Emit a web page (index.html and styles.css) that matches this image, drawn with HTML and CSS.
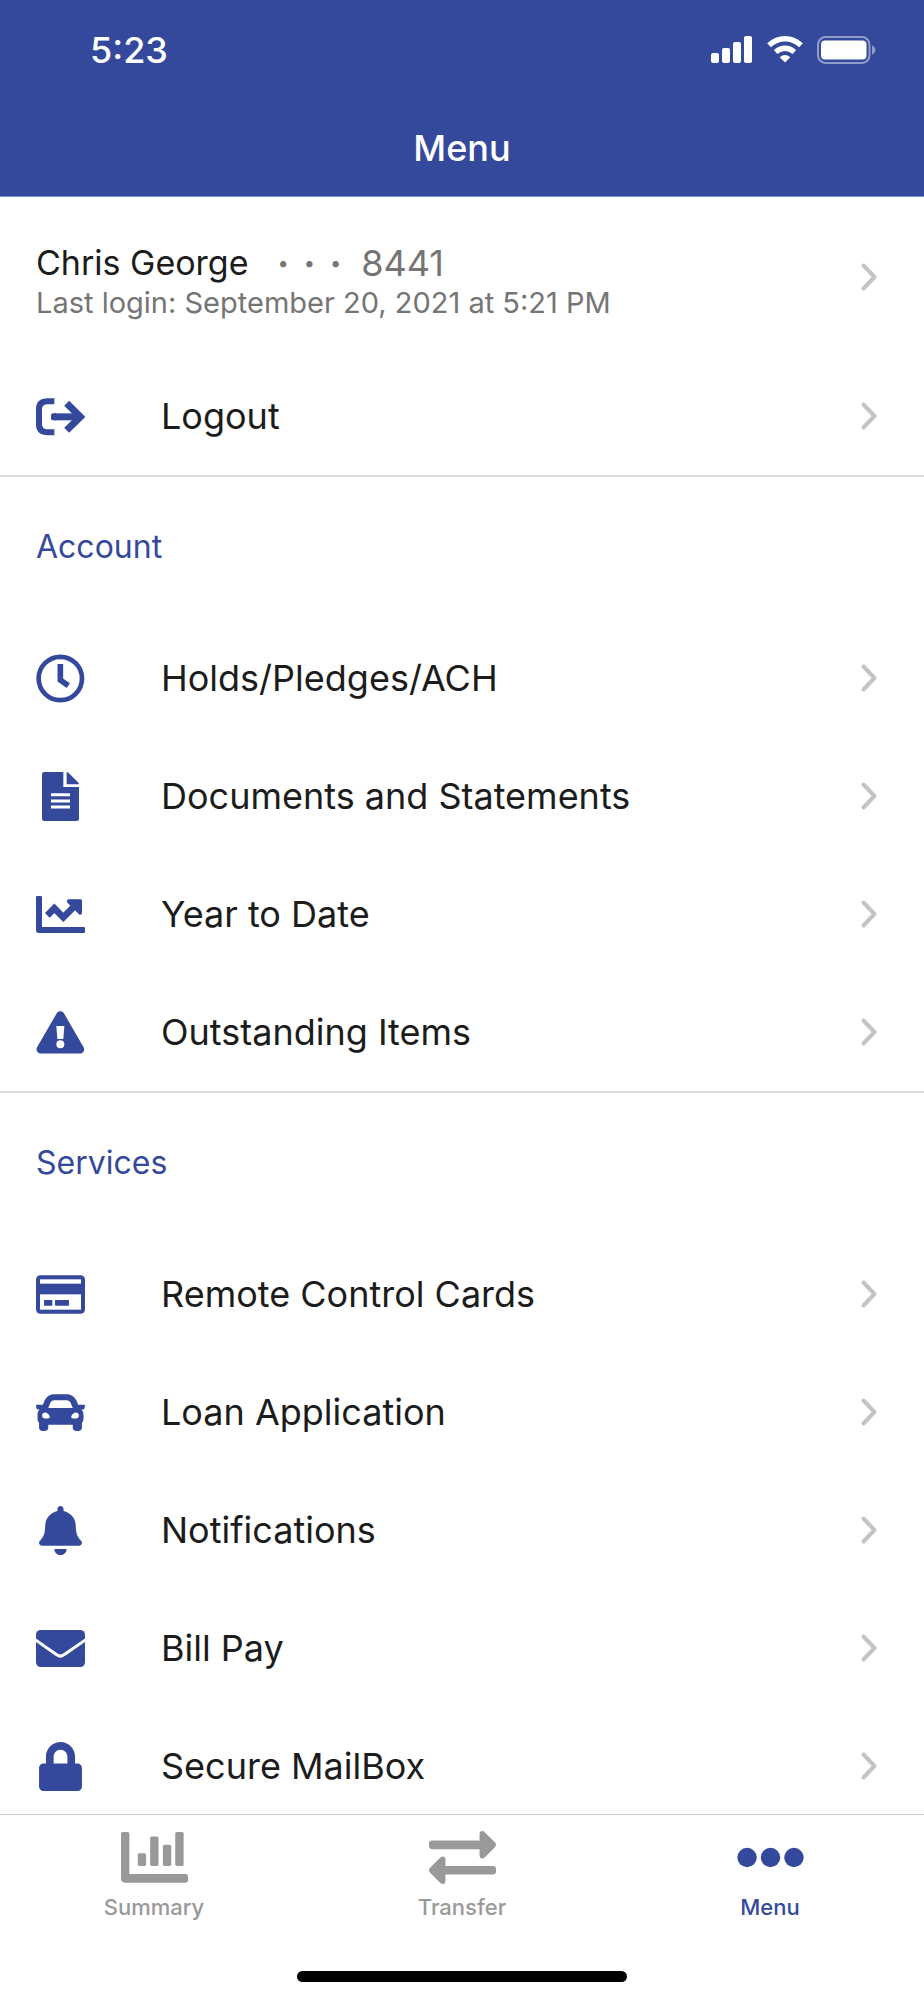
FILE: index.html
```html
<!DOCTYPE html>
<html lang="en">
<head>
  <meta charset="UTF-8">
  <meta name="viewport" content="width=device-width, initial-scale=1">
  <title>Menu</title>
  <link rel="stylesheet" href="styles.css">
</head>
<body>
  <!-- chevron shared by every row -->
  <svg class="sprite" aria-hidden="true">
    <symbol id="chevron" viewBox="0 0 16 28">
      <path d="M2.5 2.5L13.5 14L2.5 25.5" fill="none" stroke="#c4c4c6" stroke-width="4" stroke-linecap="round" stroke-linejoin="round"/>
    </symbol>
  </svg>

  <header class="header">
    <div class="status-bar">
      <span class="time">5:23</span>
      <div class="status-icons">
        <svg width="42" height="28" viewBox="0 0 42 28" fill="#fff">
          <rect x="0" y="17" width="8" height="10" rx="2"/>
          <rect x="11" y="12" width="8" height="15" rx="2"/>
          <rect x="22" y="6" width="8" height="21" rx="2"/>
          <rect x="33" y="0" width="8" height="27" rx="2"/>
        </svg>
        <svg width="36" height="28" viewBox="0 0 36 28" fill="none" stroke="#fff" stroke-width="5.4">
          <path d="M2 9.2Q9.2 2.7 18 2.7T34 9.2"/>
          <path d="M8.600 16Q13 12.200 18 12.200T27.400 16"/>
          <path d="M18 26.500L12.700 21.200Q18 16.600 23.300 21.200Z" fill="#fff" stroke="none"/>
        </svg>
        <svg width="59" height="28" viewBox="0 0 59 28">
          <rect x="1" y="1" width="51.500" height="26" rx="7.500" fill="none" stroke="#929cc9" stroke-width="2"/>
          <rect x="4" y="4.500" width="45.500" height="19" rx="4" fill="#fff"/>
          <path d="M55 9.500Q58.300 11 58.300 14T55 18.500Z" fill="#929cc9"/>
        </svg>
      </div>
    </div>
    <h1 class="title">Menu</h1>
  </header>

  <main class="content">
    <a class="user" href="#">
      <div class="user-text">
        <div class="user-name">
          <span>Chris George</span>
          <span class="dots"><i>•</i><i>•</i><i>•</i></span>
          <span class="number">8441</span>
        </div>
        <div class="last-login">Last login: September 20, 2021 at 5:21 PM</div>
      </div>
      <svg class="chevron"><use href="#chevron"/></svg>
    </a>

    <a class="row" href="#">
      <svg class="icon" viewBox="0 0 147 147" fill="none" stroke="currentColor">
        <path d="M55 28H35Q9 28 9 52V97Q9 121 35 121H55" stroke-width="18"/>
        <path d="M55 74.500H130" stroke-width="21"/>
        <path d="M45 70Q45 64 51 64H60V85H51Q45 85 45 79Z" fill="currentColor" stroke="none"/>
        <path d="M92 34L133 74.500L92 115" stroke-width="21"/>
      </svg>
      <span class="label">Logout</span>
      <svg class="chevron"><use href="#chevron"/></svg>
    </a>

    <section class="group">
      <h2 class="group-title">Account</h2>
      <a class="row" href="#">
        <svg class="icon" viewBox="0 0 147 147" fill="none" stroke="currentColor">
          <circle cx="73" cy="73.500" r="65" stroke-width="14"/>
          <path d="M73 30V78L97 95" stroke-width="17"/>
        </svg>
        <span class="label">Holds/Pledges/ACH</span>
        <svg class="chevron"><use href="#chevron"/></svg>
      </a>
      <a class="row" href="#">
        <svg class="icon" viewBox="0 0 147 147" fill="currentColor">
          <path d="M25 0H82V45H129V140Q129 147 122 147H25Q18 147 18 140V7Q18 0 25 0Z"/>
          <path d="M92 0Q95 0 98 3L126 31Q129 34 129 37H92Z"/>
          <path d="M45 68H102M45 87H102M45 105H102" stroke="#fff" stroke-width="9"/>
        </svg>
        <span class="label">Documents and Statements</span>
        <svg class="chevron"><use href="#chevron"/></svg>
      </a>
      <a class="row" href="#">
        <svg class="icon" viewBox="0 0 147 147" fill="currentColor">
          <path d="M4 18H14Q18 18 18 22V111H143Q147 111 147 115V125Q147 129 143 129H8Q0 129 0 121V22Q0 18 4 18Z"/>
          <path d="M34 76L55 55L82 82L118 46" fill="none" stroke="currentColor" stroke-width="20"/>
          <path d="M97 28H134Q138 28 138 32V70Q134 78 128 72L95 39Q89 32 97 28Z"/>
        </svg>
        <span class="label">Year to Date</span>
        <svg class="chevron"><use href="#chevron"/></svg>
      </a>
      <a class="row" href="#">
        <svg class="icon" viewBox="0 0 147 147" fill="currentColor">
          <path d="M73 22L132 124H14Z" stroke="currentColor" stroke-width="25" stroke-linejoin="round"/>
          <path d="M61 54H85L82 93H64Z" fill="#fff"/>
          <circle cx="73" cy="109" r="12" fill="#fff"/>
        </svg>
        <span class="label">Outstanding Items</span>
        <svg class="chevron"><use href="#chevron"/></svg>
      </a>
    </section>

    <section class="group">
      <h2 class="group-title">Services</h2>
      <a class="row" href="#">
        <svg class="icon" viewBox="0 0 147 147" fill="currentColor">
          <rect x="0" y="16" width="147" height="115" rx="13"/>
          <rect x="12" y="28" width="123" height="13" fill="#fff"/>
          <rect x="12" y="73" width="123" height="46" fill="#fff"/>
          <rect x="24" y="90" width="25" height="17" rx="2"/>
          <rect x="57" y="90" width="42" height="17" rx="2"/>
        </svg>
        <span class="label">Remote Control Cards</span>
        <svg class="chevron"><use href="#chevron"/></svg>
      </a>
      <a class="row" href="#">
        <svg class="icon" viewBox="0 0 512 512" fill="currentColor">
          <path d="M499.990 176h-59.870l-16.640-41.600C406.380 91.630 365.570 64 319.500 64h-127c-46.060 0-86.880 27.630-103.990 70.400L71.870 176H12.010C4.200 176-1.530 183.340.370 190.910l6 24C7.700 220.250 12.500 224 18.010 224h20.070C24.650 235.730 16 252.780 16 272v48c0 16.120 6.160 30.670 16 41.930V416c0 17.670 14.330 32 32 32h32c17.670 0 32-14.330 32-32v-32h256v32c0 17.670 14.330 32 32 32h32c17.670 0 32-14.330 32-32v-54.070c9.840-11.250 16-25.800 16-41.930v-48c0-19.220-8.650-36.270-22.070-48H494c5.510 0 10.310-3.750 11.640-9.090l6-24c1.890-7.570-3.840-14.910-11.650-14.910zm-352.060-17.830c7.290-18.220 24.940-30.170 44.570-30.170h127c19.630 0 37.280 11.950 44.570 30.170L384 208H128l19.930-49.830zM96 319.800c-19.200 0-32-12.760-32-31.900S76.800 256 96 256s48 28.710 48 47.850-28.800 15.950-48 15.950zm320 0c-19.200 0-48 3.190-48-15.950S396.800 256 416 256s32 12.760 32 31.900-12.800 31.900-32 31.900z"/>
        </svg>
        <span class="label">Loan Application</span>
        <svg class="chevron"><use href="#chevron"/></svg>
      </a>
      <a class="row" href="#">
        <svg class="icon" viewBox="0 0 448 512" fill="currentColor">
          <path d="M224 512c35.320 0 63.970-28.650 63.970-64H160.030c0 35.350 28.650 64 63.970 64zm215.390-149.710c-19.320-20.760-55.470-51.990-55.470-154.290 0-77.700-54.480-139.900-127.940-155.160V32c0-17.670-14.320-32-31.980-32s-31.980 14.330-31.980 32v20.840C118.560 68.100 64.080 130.300 64.080 208c0 102.300-36.150 133.530-55.470 154.290-6 6.450-8.660 14.160-8.610 21.710.110 16.400 12.980 32 32.100 32h383.800c19.120 0 32-15.600 32.100-32 .050-7.550-2.610-15.270-8.610-21.710z"/>
        </svg>
        <span class="label">Notifications</span>
        <svg class="chevron"><use href="#chevron"/></svg>
      </a>
      <a class="row" href="#">
        <svg class="icon" viewBox="0 0 147 147" fill="currentColor">
          <rect x="0" y="18" width="147" height="111" rx="14"/>
          <path d="M-4 46L62 92Q73 101 84 92L151 46" fill="none" stroke="#fff" stroke-width="9"/>
        </svg>
        <span class="label">Bill Pay</span>
        <svg class="chevron"><use href="#chevron"/></svg>
      </a>
      <a class="row" href="#">
        <svg class="icon" viewBox="0 0 448 512" fill="currentColor">
          <path d="M400 224h-24v-72C376 68.200 307.800 0 224 0S72 68.200 72 152v72H48c-26.500 0-48 21.500-48 48v192c0 26.500 21.500 48 48 48h352c26.500 0 48-21.500 48-48V272c0-26.500-21.500-48-48-48zm-104 0H152v-72c0-39.700 32.300-72 72-72s72 32.300 72 72v72z"/>
        </svg>
        <span class="label">Secure MailBox</span>
        <svg class="chevron"><use href="#chevron"/></svg>
      </a>
    </section>
  </main>

  <footer class="footer">
    <nav class="tabs">
      <a class="tab" href="#">
        <svg class="tab-icon" viewBox="0 0 200 158" fill="currentColor">
          <path d="M6 3H19Q25 3 25 9V128H194Q200 128 200 134V148Q200 154 194 154H12Q0 154 0 142V9Q0 3 6 3Z"/>
          <rect x="50" y="66" width="25" height="38" rx="5"/>
          <rect x="87" y="16" width="25" height="88" rx="5"/>
          <rect x="125" y="41" width="25" height="63" rx="5"/>
          <rect x="162" y="3" width="25" height="101" rx="5"/>
        </svg>
        <span>Summary</span>
      </a>
      <a class="tab" href="#">
        <svg class="tab-icon" viewBox="0 0 200 158" fill="currentColor">
          <path id="arrow" d="M9 28H151V9Q151 0 159 0Q163 0 167 4L196 33Q204 41 196 49L167 78Q163 82 159 82Q151 82 151 73V54H9Q0 54 0 45V37Q0 28 9 28Z"/>
          <use href="#arrow" transform="rotate(180 100 79)"/>
        </svg>
        <span>Transfer</span>
      </a>
      <a class="tab active" href="#">
        <svg class="tab-icon" viewBox="0 0 200 158" fill="currentColor">
          <circle cx="30" cy="79" r="29"/>
          <circle cx="100" cy="79" r="29"/>
          <circle cx="170" cy="79" r="29"/>
        </svg>
        <span>Menu</span>
      </a>
    </nav>
    <div class="home-indicator"></div>
  </footer>
</body>
</html>
```
FILE: styles.css
```css
* {
  box-sizing: border-box;
}

body {
  margin: 0;
  height: 100vh;
  display: flex;
  flex-direction: column;
  font-family: Inter, "Liberation Sans", sans-serif;
  background-color: #fff;
  color: #1c1c1c;
}

a {
  color: inherit;
  text-decoration: none;
}

.sprite {
  display: none;
}

.header {
  flex: none;
  background-color: #35499c;
  border-bottom: 1px solid #7f8bc0;
  color: #fff;
}

.status-bar {
  display: flex;
  justify-content: space-between;
  align-items: center;
  height: 100px;
  padding: 0 48px 0 90px;
}

.time {
  font-size: 36px;
  font-weight: 500;
}

.status-icons {
  display: flex;
  gap: 14px;
}

.title {
  margin: 0;
  font-size: 36px;
  font-weight: 500;
  line-height: 96px;
  text-align: center;
}

.content {
  flex: 1;
  min-height: 0;
  overflow-y: auto;
  scrollbar-width: none;
}

.user {
  display: flex;
  justify-content: space-between;
  align-items: center;
  height: 160px;
  padding: 0 47px 0 36px;
}

.user-text {
  padding-top: 12px;
  line-height: 40px;
}

.user-name {
  display: flex;
  font-size: 34px;
}

.dots {
  display: flex;
  gap: 15px;
  padding: 0 20px 0 29px;
  font-size: 20px;
  color: #757575;
}

.dots i {
  font-style: normal;
}

.number,
.last-login {
  color: #757575;
}

.number {
  font-size: 36px;
}

.last-login {
  font-size: 29px;
}

.row {
  display: flex;
  align-items: center;
  height: 118px;
  padding: 0 47px 0 36px;
}

.icon {
  width: 49px;
  height: 49px;
  color: #35499c;
}

.label {
  flex: 1;
  padding-left: 76px;
  font-size: 36px;
}

.chevron {
  width: 16px;
  height: 28px;
}

.group {
  border-top: 2px solid #dedede;
}

.group-title {
  margin: 0;
  height: 142px;
  padding-left: 36px;
  font-size: 32px;
  font-weight: 400;
  line-height: 140px;
  color: #35499c;
}

.footer {
  flex: none;
  height: 186px;
  border-top: 1px solid #c8c8c8;
  background-color: #fff;
}

.tabs {
  display: flex;
}

.tab {
  flex: 1;
  display: flex;
  flex-direction: column;
  align-items: center;
  gap: 8px;
  height: 156px;
  padding-top: 16px;
  font-size: 22px;
  font-weight: 500;
  line-height: 30px;
  color: #999;
}

.tab.active {
  color: #35499c;
}

.tab-icon {
  width: 67px;
  height: 53px;
}

.home-indicator {
  width: 330px;
  height: 11px;
  margin: 0 auto;
  border-radius: 6px;
  background-color: #000;
}
```
